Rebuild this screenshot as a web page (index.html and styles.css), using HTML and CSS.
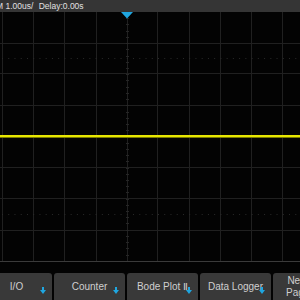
FILE: index.html
```html
<!DOCTYPE html>
<html lang="en">
<head>
    <meta charset="UTF-8">
    <meta name="viewport" content="width=device-width, initial-scale=1.0">
    <title>Scope</title>
    <link rel="stylesheet" href="styles.css">
</head>
<body>
    <div class="scope">
        <div class="status">
            <span class="timebase">M 1.00us/</span>
            <span class="delay">Delay:0.00s</span>
        </div>

        <div class="screen">
            <svg class="grid" width="300" height="249" viewBox="0 0 300 249">
                <!-- vertical divisions -->
                <g fill="#202020">
                    <rect x="2" y="0" width="1" height="249"/>
                    <rect x="33" y="0" width="1" height="249"/>
                    <rect x="64" y="0" width="1" height="249"/>
                    <rect x="96" y="0" width="1" height="249"/>
                    <rect x="127" y="0" width="1" height="249"/>
                    <rect x="157" y="0" width="1" height="249"/>
                    <rect x="189" y="0" width="1" height="249"/>
                    <rect x="220" y="0" width="1" height="249"/>
                    <rect x="251" y="0" width="1" height="249"/>
                    <rect x="282" y="0" width="1" height="249"/>
                </g>
                <!-- horizontal divisions -->
                <g fill="#202020">
                    <rect x="0" y="31" width="300" height="1"/>
                    <rect x="0" y="61" width="300" height="1"/>
                    <rect x="0" y="93" width="300" height="1"/>
                    <rect x="0" y="124" width="300" height="1"/>
                    <rect x="0" y="155" width="300" height="1"/>
                    <rect x="0" y="186" width="300" height="1"/>
                    <rect x="0" y="218" width="300" height="1"/>
                </g>
                <!-- dotted levels -->
                <g stroke="#2a2a2a" stroke-width="1" stroke-dasharray="1 5.24">
                    <line x1="2" y1="46.5" x2="300" y2="46.5"/>
                    <line x1="2" y1="202.5" x2="300" y2="202.5"/>
                </g>
                <!-- ticks on the center axis -->
                <g id="ticks" fill="#262626"></g>
                <!-- CH1 trace -->
                <rect x="0" y="123" width="300" height="2" fill="#e6e600"/>
                <rect x="0" y="125" width="300" height="1" fill="#7a7a00"/>
                <!-- trigger position -->
                <polygon points="121,0 133,0 127,6.5" fill="#1fa6e0"/>
            </svg>
        </div>

        <div class="softkeys">
            <div class="key">I/O<svg class="arrow" width="6" height="7" viewBox="0 0 6 7"><path d="M2 0h2v3h2l-3 4-3-4h2z"/></svg></div>
            <div class="key">Counter<svg class="arrow" width="6" height="7" viewBox="0 0 6 7"><path d="M2 0h2v3h2l-3 4-3-4h2z"/></svg></div>
            <div class="key">Bode Plot Ⅱ<svg class="arrow" width="6" height="7" viewBox="0 0 6 7"><path d="M2 0h2v3h2l-3 4-3-4h2z"/></svg></div>
            <div class="key">Data Logger<svg class="arrow" width="6" height="7" viewBox="0 0 6 7"><path d="M2 0h2v3h2l-3 4-3-4h2z"/></svg></div>
            <div class="key next">Next<br>Page</div>
        </div>
    </div>

    <script>
        // small ticks along the center vertical axis
        let ticks = document.getElementById("ticks");
        for (let i = 1; i < 40; i++) {
            let y = Math.round(i * 6.22);
            let r = document.createElementNS("http://www.w3.org/2000/svg", "rect");
            r.setAttribute("x", 126);
            r.setAttribute("y", y);
            r.setAttribute("width", 3);
            r.setAttribute("height", 1);
            ticks.appendChild(r);
        }
    </script>
</body>
</html>
```

FILE: styles.css
```css
body {
    margin: 0;
    background: #000;
    font-family: "Liberation Sans", Arial, sans-serif;
    overflow: hidden;
}
.scope {
    width: 300px;
    height: 300px;
    overflow: hidden;
    background: #030303;
}
.status {
    height: 12px;
    background: #353535;
    color: #e0e0e0;
    font-size: 8.5px;
    line-height: 12px;
    white-space: nowrap;
    margin-left: -4px;
}
.delay {
    margin-left: 3px;
}
.screen {
    height: 249px;
    border-bottom: 1px solid #3a3a3a;
}
.grid {
    display: block;
}
.softkeys {
    display: flex;
    gap: 2px;
    margin-top: 11px;
    margin-left: -19px;
}
.key {
    position: relative;
    flex: 0 0 71px;
    height: 27px;
    background: #393939;
    border-radius: 3px 3px 0 0;
    color: #cfcfcf;
    font-size: 10px;
    line-height: 12.5px;
    display: flex;
    align-items: center;
    justify-content: center;
    text-align: center;
    white-space: nowrap;
    padding-top: 1px;
    box-sizing: border-box;
}
.next {
    justify-content: flex-start;
    padding-left: 13px;
}
.arrow {
    position: absolute;
    right: 6px;
    top: 14px;
    fill: #1fa6e0;
}
```
